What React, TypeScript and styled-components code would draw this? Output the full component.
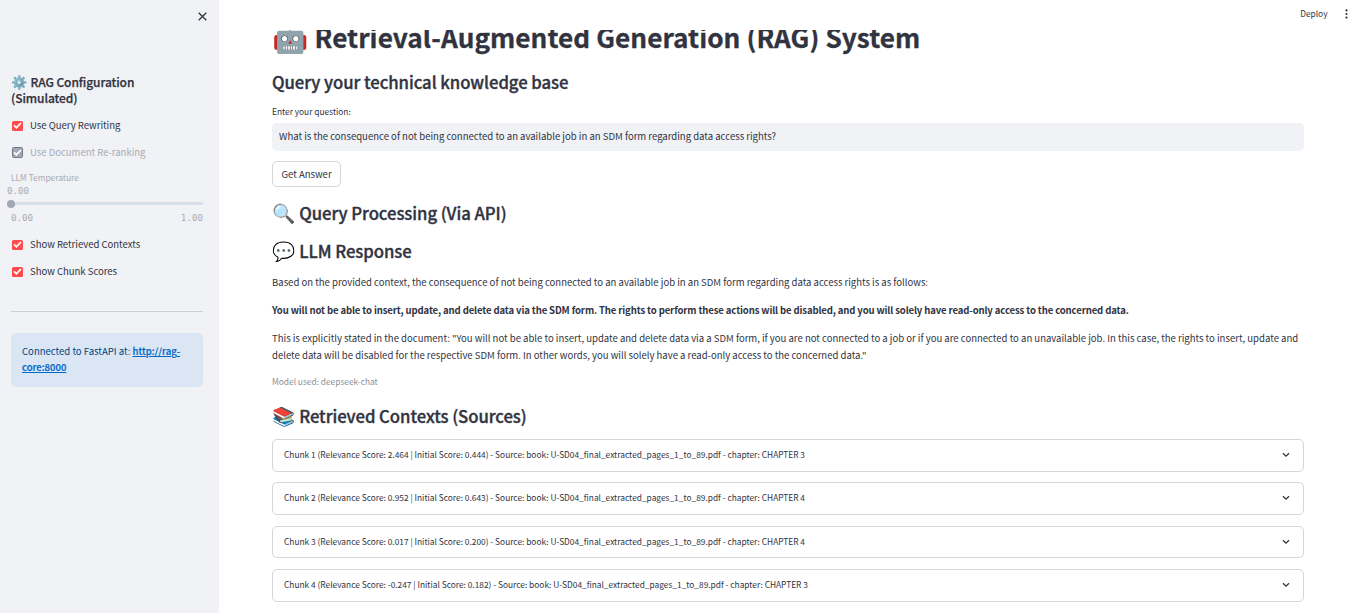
import React from "react";
import styled, { createGlobalStyle } from "styled-components";

const Global = createGlobalStyle`
  * { box-sizing: border-box; }
  body { margin: 0; background: #fff; }
  h1, h2, h3, p { margin: 0; }
`;

const Page = styled.div`
  display: flex;
  width: 100%;
  height: 613px;
  overflow: hidden;
  color: #31333f;
  font-family: "Noto Sans CJK SC", "Noto Color Emoji", sans-serif;
  font-size: 9.55px;
  line-height: 17px;
`;

const Sidebar = styled.aside`
  width: 219px;
  flex: none;
  padding: 0 16px 0 11px;
  background: #f0f2f6;
`;

const CloseRow = styled.div`
  display: flex;
  justify-content: flex-end;
  height: 74px;
  padding: 12px 0 0;
  margin-right: -4px;
`;

const SideTitle = styled.h2`
  margin-bottom: 6px;
  font-size: 12px;
  line-height: 16px;
  font-weight: 500;
  letter-spacing: -0.08px;
  -webkit-text-stroke: 0.25px currentColor;
  white-space: nowrap;
`;

const Emoji = styled.span<{ $size: number; $gap: number }>`
  display: inline-block;
  font-family: "Noto Color Emoji", sans-serif;
  font-size: ${(p) => p.$size}px;
  line-height: 1;
  height: 1em;
  margin-right: ${(p) => p.$gap}px;
  -webkit-text-stroke: 0;
`;

const CheckRow = styled.label<{ $disabled?: boolean }>`
  display: flex;
  align-items: center;
  gap: 7px;
  height: 27px;
  padding-left: 1px;
  letter-spacing: -0.02px;
  color: ${(p) => (p.$disabled ? "#a9abb4" : "#31333f")};
`;

const Box = styled.span<{ $disabled?: boolean }>`
  display: flex;
  align-items: center;
  justify-content: center;
  width: 11px;
  height: ${(p) => (p.$disabled ? "11px" : "10px")};
  border-radius: 1.5px;
  border: ${(p) => (p.$disabled ? "1px solid #777984" : "0")};
  background: ${(p) => (p.$disabled ? "#a3a8b8" : "#ff4b4b")};
  svg { flex: none; }
`;

const Slider = styled.div`
  padding-top: 4px;
  height: 65px;
  color: #a9abb4;
`;

const SliderLabel = styled.div`
  font-size: 8.35px;
  line-height: 15px;
`;

const Mono = styled.div`
  display: flex;
  justify-content: space-between;
  font-family: "DejaVu Sans Mono", monospace;
  font-size: 9.2px;
  line-height: 12px;
`;

const ThumbValue = styled(Mono)`
  margin-left: -4px;
`;

const Track = styled.div`
  display: flex;
  align-items: center;
  height: 3px;
  margin: 5px 0 7px;
  border-radius: 2px;
  background: #d9dfe9;
`;

const Thumb = styled.span`
  width: 8px;
  height: 8px;
  margin-left: -4px;
  border-radius: 50%;
  background: #a3a8b8;
`;

const Divider = styled.hr`
  height: 1px;
  margin: 26px 0 21px;
  border: 0;
  background: #cdcfd5;
`;

const Info = styled.div`
  height: 54px;
  padding: 10px 11px;
  border-radius: 5px;
  background: #dae6f4;
  color: #004280;
  line-height: 16px;
  white-space: nowrap;
`;

const Link = styled.a`
  color: #0068c9;
  font-weight: 500;
  text-decoration: underline;
  -webkit-text-stroke: 0.2px currentColor;
`;

const Main = styled.main`
  flex: 1;
  min-width: 0;
`;

const Header = styled.header`
  display: flex;
  align-items: center;
  justify-content: flex-end;
  gap: 15.5px;
  height: 30px;
  padding: 0 7px 3px 0;
  font-size: 8.35px;
`;

const Scroll = styled.div`
  height: 583px;
  overflow: hidden;
  padding: 0 54px 0 53px;
`;

const Title = styled.h1`
  margin: -10px 0 11px;
  height: 40px;
  font-size: 26.2px;
  line-height: 35px;
  font-weight: 700;
  letter-spacing: 0.05px;
  -webkit-text-stroke: 0.3px currentColor;
  white-space: nowrap;
`;

const Heading = styled.h3<{ $h: number }>`
  height: ${(p) => p.$h}px;
  font-size: 16.7px;
  line-height: 22px;
  font-weight: 500;
  letter-spacing: -0.05px;
  -webkit-text-stroke: 0.35px currentColor;
  white-space: nowrap;
`;

const FieldLabel = styled.div`
  height: 19px;
  font-size: 8.35px;
  line-height: 15px;
`;

const Field = styled.div`
  display: flex;
  align-items: center;
  height: 28px;
  padding: 0 7px 1px;
  border-radius: 5px;
  background: #f0f2f6;
`;

const Button = styled.button`
  display: block;
  width: 69px;
  height: 26px;
  margin: 10px 0 15px;
  padding: 0;
  border: 1px solid #d6d6d9;
  border-radius: 5px;
  background: #fff;
  color: inherit;
  font: inherit;
`;

const Para = styled.p<{ $bold?: boolean }>`
  margin-bottom: 11px;
  font-weight: ${(p) => (p.$bold ? 700 : 400)};
  letter-spacing: ${(p) => (p.$bold ? "-0.125px" : "-0.003px")};
  white-space: nowrap;
`;

const Caption = styled.div`
  margin-top: -1px;
  height: 31px;
  font-size: 8.35px;
  line-height: 15px;
  color: #8e9097;
`;

const Chunks = styled.div`
  display: flex;
  flex-direction: column;
  gap: 10.67px;
  padding-top: 1px;
`;

const Chunk = styled.div`
  display: flex;
  align-items: center;
  justify-content: space-between;
  height: 32.67px;
  padding: 0 13.5px 1.6px 11px;
  border: 1px solid #d6d6d9;
  border-radius: 5px;
  font-size: 8.358px;
  svg { margin-top: 1px; }
`;

const Check = ({ disabled }: { disabled?: boolean }) => (
  <Box $disabled={disabled}>
    <svg width="9" height="7" viewBox="0 0 9 7" fill="none" stroke="#fff" strokeWidth="1.7">
      <path d="M1 3.4 3.4 5.7 8 1" />
    </svg>
  </Box>
);

const chunks = [
  ["2.464", "0.444", 3],
  ["0.952", "0.643", 4],
  ["0.017", "0.200", 4],
  ["-0.247", "0.182", 3],
];

export default function App() {
  return (
    <Page>
      <Global />
      <Sidebar>
        <CloseRow>
          <svg width="9" height="9" viewBox="0 0 9 9" stroke="#31333f" strokeWidth="1.3">
            <path d="M.7.7 8.3 8.3M8.3.7.7 8.3" />
          </svg>
        </CloseRow>
        <SideTitle>
          <Emoji $size={13.3} $gap={3}>⚙️</Emoji>RAG Configuration
          <br />
          (Simulated)
        </SideTitle>
        <CheckRow><Check />Use Query Rewriting</CheckRow>
        <CheckRow $disabled><Check disabled />Use Document Re-ranking</CheckRow>
        <Slider>
          <SliderLabel>LLM Temperature</SliderLabel>
          <ThumbValue>0.00</ThumbValue>
          <Track><Thumb /></Track>
          <Mono><span>0.00</span><span>1.00</span></Mono>
        </Slider>
        <CheckRow><Check />Show Retrieved Contexts</CheckRow>
        <CheckRow><Check />Show Chunk Scores</CheckRow>
        <Divider />
        <Info>
          Connected to FastAPI at: <Link>http://rag-<br />core:8000</Link>
        </Info>
      </Sidebar>
      <Main>
        <Header>
          <span>Deploy</span>
          <svg width="8" height="10" viewBox="0 0 8 10" fill="#31333f">
            <circle cx="3.5" cy="1.4" r="1.1" />
            <circle cx="3.5" cy="5" r="1.1" />
            <circle cx="3.5" cy="8.6" r="1.1" />
          </svg>
        </Header>
        <Scroll>
          <Title><Emoji $size={29.3} $gap={6}>🤖</Emoji>Retrieval-Augmented Generation (RAG) System</Title>
          <Heading $h={33}>Query your technical knowledge base</Heading>
          <FieldLabel>Enter your question:</FieldLabel>
          <Field>What is the consequence of not being connected to an available job in an SDM form regarding data access rights?</Field>
          <Button>Get Answer</Button>
          <Heading $h={38}><Emoji $size={18.67} $gap={4}>🔍</Emoji>Query Processing (Via API)</Heading>
          <Heading $h={34}><Emoji $size={18.67} $gap={4}>💬</Emoji>LLM Response</Heading>
          <Para>Based on the provided context, the consequence of not being connected to an available job in an SDM form regarding data access rights is as follows:</Para>
          <Para $bold>You will not be able to insert, update, and delete data via the SDM form. The rights to perform these actions will be disabled, and you will solely have read-only access to the concerned data.</Para>
          <Para>
            This is explicitly stated in the document: "You will not be able to insert, update and delete data via a SDM form, if you are not connected to a job or if you are connected to an unavailable job. In this case, the rights to insert, update and
            <br />
            delete data will be disabled for the respective SDM form. In other words, you will solely have a read-only access to the concerned data."
          </Para>
          <Caption>Model used: deepseek-chat</Caption>
          <Heading $h={33}><Emoji $size={18.67} $gap={4}>📚</Emoji>Retrieved Contexts (Sources)</Heading>
          <Chunks>
            {chunks.map(([rel, init, ch], i) => (
              <Chunk key={i}>
                <span>{`Chunk ${i + 1} (Relevance Score: ${rel} | Initial Score: ${init}) - Source: book: U-SD04_final_extracted_pages_1_to_89.pdf - chapter: CHAPTER ${ch}`}</span>
                <svg width="8" height="6" viewBox="0 0 8 6" fill="none" stroke="#31333f" strokeWidth="1.3">
                  <path d="M1 1.2 4 4.2 7 1.2" />
                </svg>
              </Chunk>
            ))}
          </Chunks>
        </Scroll>
      </Main>
    </Page>
  );
}
